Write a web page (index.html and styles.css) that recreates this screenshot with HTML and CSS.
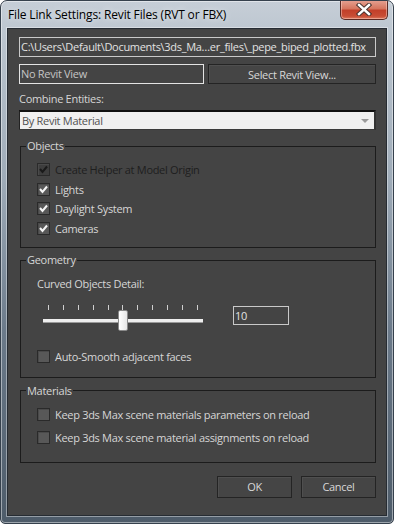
FILE: index.html
```html
<!DOCTYPE html>
<html>
<head>
  <meta charset="UTF-8">
  <title>File Link Settings: Revit Files (RVT or FBX)</title>
  <link rel="stylesheet" href="styles.css">
</head>
<body>
  <div class="window">
    <div class="titlebar">
      <span class="title">File Link Settings: Revit Files (RVT or FBX)</span>
      <button class="close" title="Close">
        <svg width="16" height="13" viewBox="0 0 16 13">
          <path d="M3 2 L13 11 M13 2 L3 11" stroke="#4a3430" stroke-width="4.4" stroke-linecap="square"/>
          <path d="M3 2 L13 11 M13 2 L3 11" stroke="#ffffff" stroke-width="2.4" stroke-linecap="square"/>
        </svg>
      </button>
    </div>

    <div class="client">
      <div class="field path">C:\Users\Default\Documents\3ds_Ma…er_files\_pepe_biped_plotted.fbx</div>

      <div class="view-row">
        <div class="field view">No Revit View</div>
        <button class="btn select">Select Revit View...</button>
      </div>

      <div class="label combine-label">Combine Entities:</div>
      <div class="combo">
        <span>By Revit Material</span>
        <span class="arrow"></span>
      </div>

      <fieldset class="group objects">
        <legend>Objects</legend>
        <div class="group-body">
          <div class="check disabled">
            <span class="box"><svg width="11" height="11" viewBox="0 0 11 11"><polyline points="2,5 4.5,8 9,2.5" fill="none" stroke="currentColor" stroke-width="2"/></svg></span>
            <span>Create Helper at Model Origin</span>
          </div>
          <div class="check">
            <span class="box"><svg width="11" height="11" viewBox="0 0 11 11"><polyline points="2,5 4.5,8 9,2.5" fill="none" stroke="currentColor" stroke-width="2"/></svg></span>
            <span>Lights</span>
          </div>
          <div class="check">
            <span class="box"><svg width="11" height="11" viewBox="0 0 11 11"><polyline points="2,5 4.5,8 9,2.5" fill="none" stroke="currentColor" stroke-width="2"/></svg></span>
            <span>Daylight System</span>
          </div>
          <div class="check">
            <span class="box"><svg width="11" height="11" viewBox="0 0 11 11"><polyline points="2,5 4.5,8 9,2.5" fill="none" stroke="currentColor" stroke-width="2"/></svg></span>
            <span>Cameras</span>
          </div>
        </div>
      </fieldset>

      <fieldset class="group geometry">
        <legend>Geometry</legend>
        <div class="group-body">
          <div class="label">Curved Objects Detail:</div>
          <div class="slider-row">
            <div class="slider">
              <div class="ticks">
                <i></i><i></i><i></i><i></i><i></i><i></i><i></i><i></i><i></i><i></i><i></i>
              </div>
              <div class="track"></div>
              <div class="thumb"></div>
            </div>
            <div class="field value">10</div>
          </div>
          <div class="check smooth">
            <span class="box"></span>
            <span>Auto-Smooth adjacent faces</span>
          </div>
        </div>
      </fieldset>

      <fieldset class="group materials">
        <legend>Materials</legend>
        <div class="group-body">
          <div class="check">
            <span class="box"></span>
            <span>Keep 3ds Max scene materials parameters on reload</span>
          </div>
          <div class="check">
            <span class="box"></span>
            <span>Keep 3ds Max scene material assignments on reload</span>
          </div>
        </div>
      </fieldset>

      <div class="button-row">
        <button class="btn">OK</button>
        <button class="btn">Cancel</button>
      </div>
    </div>
  </div>
</body>
</html>
```

FILE: styles.css
```css
body {
  margin: 0;
  font-family: 'Open Sans', 'Liberation Sans', sans-serif;
  font-size: 11px;
  letter-spacing: -0.3px;
  background: #ffffff;
}

.window {
  width: 394px;
  height: 524px;
  box-sizing: border-box;
  display: flex;
  flex-direction: column;
  border: 1px solid #36414d;
  border-radius: 7px 7px 5px 5px;
  box-shadow: inset 0 0 0 1px rgba(255,255,255,0.45);
  background: linear-gradient(#c6ced7 0, #bac4ce 40px, #9eabb8 180px, #6b7a8a 330px, #4d5b69 524px);
  overflow: hidden;
}

.titlebar {
  height: 27px;
  display: flex;
  justify-content: space-between;
  align-items: flex-start;
}

.title {
  padding: 6px 0 0 7px;
  line-height: 15px;
  font-size: 12px;
  letter-spacing: -0.15px;
  color: #000;
  text-shadow: 0 0 6px rgba(255,255,255,0.8);
}

.close {
  width: 48px;
  height: 20px;
  margin: -1px 5px 0 0;
  padding: 0;
  border: 1px solid #5a2a24;
  border-top: none;
  border-radius: 0 0 5px 5px;
  background: linear-gradient(#e6a394 0, #d6765f 45%, #c2402a 55%, #c84d35 85%, #de7a5e 100%);
  box-shadow: inset 0 0 0 1px rgba(255,220,210,0.45);
  display: flex;
  align-items: center;
  justify-content: center;
  cursor: pointer;
}

.client {
  flex: 1;
  margin: 0 6px 7px;
  padding: 8px 10px 0 11px;
  background: #444444;
  border: 1px solid #262c33;
  box-shadow: 0 0 0 1px rgba(255,255,255,0.4);
  color: #d6d6d6;
}

.field {
  box-sizing: border-box;
  height: 20px;
  line-height: 18px;
  padding: 0 1px;
  border: 1px solid #c9c9c9;
  color: #e2e2e2;
  white-space: nowrap;
  overflow: hidden;
}

.view-row {
  display: flex;
  gap: 4px;
  margin-top: 7px;
}

.view {
  width: 185px;
  border-color: #e4e4e4;
  color: #c4c4c4;
}

.btn {
  box-sizing: border-box;
  height: 22px;
  width: 75px;
  padding: 0;
  font: inherit;
  letter-spacing: inherit;
  color: #d8d8d8;
  background: #454545;
  border: 1px solid #242424;
  box-shadow: inset 1px 1px 0 #4f4f4f;
  cursor: pointer;
}

.select {
  flex: 1;
  height: 20px;
}

.label {
  line-height: 14px;
}

.combine-label {
  margin-top: 8px;
}

.combo {
  box-sizing: border-box;
  height: 20px;
  margin-top: 4px;
  padding: 0 5px 0 2px;
  display: flex;
  align-items: center;
  justify-content: space-between;
  background: #f0f0f0;
  color: #505050;
  border-top: 2px solid #111;
  border-left: 1px solid #222;
  border-right: 2px solid #333;
  border-bottom: 1px solid #3a3a3a;
}

.arrow {
  width: 0;
  height: 0;
  border-left: 4px solid transparent;
  border-right: 4px solid transparent;
  border-top: 4px solid #9a9a9a;
}

.group {
  margin: 9px 0 0 1px;
  padding: 0;
  min-width: 0;
  border: 1px solid #1c1c1c;
}

.group legend {
  margin-left: 5px;
  padding: 0 1px;
  line-height: 14px;
  color: #d6d6d6;
}

.group-body {
  padding: 7px 0 9px 16px;
}

.check {
  display: flex;
  align-items: center;
  gap: 5px;
  height: 19.5px;
}

.box {
  box-sizing: border-box;
  width: 13px;
  height: 13px;
  display: flex;
  align-items: center;
  justify-content: center;
  border: 1px solid #2a2a2a;
  background: #585858;
  box-shadow: inset 1px 1px 0 #4a4a4a;
  color: #f4f4f4;
}

.disabled {
  color: #1e1e1e;
}

.disabled .box {
  background: #3e3e3e;
  color: #1a1a1a;
}

.geometry {
  margin-top: 5px;
}

.geometry .group-body {
  padding: 10px 0 10px 16px;
}

.slider-row {
  display: flex;
  align-items: flex-start;
  margin-top: 14px;
}

.slider {
  position: relative;
  width: 160px;
  height: 26px;
  margin-left: 6px;
}

.ticks {
  display: flex;
  justify-content: space-between;
  padding: 0 5px;
  height: 5px;
}

.ticks i {
  width: 1px;
  height: 5px;
  background: #cfcfcf;
}

.track {
  height: 4px;
  margin-top: 9px;
  background: #eeeeee;
  border-bottom: 1px solid #9a9a9a;
  box-sizing: border-box;
}

.thumb {
  position: absolute;
  left: 75px;
  top: 5px;
  width: 10px;
  height: 21px;
  box-sizing: border-box;
  border: 1px solid #8a8a8a;
  border-radius: 2px;
  background: linear-gradient(90deg, #ffffff, #e6e6e6);
}

.value {
  width: 56px;
  height: 19px;
  line-height: 17px;
  margin: 1px 0 0 30px;
}

.smooth {
  margin-top: 16px;
}

.materials {
  margin-top: 6px;
}

.materials .group-body {
  padding: 7px 0 15px 16px;
}

.materials .check {
  height: 19px;
}

.materials .check + .check {
  margin-top: 4px;
}

.button-row {
  display: flex;
  justify-content: flex-end;
  gap: 9px;
  margin-top: 13px;
}
```
